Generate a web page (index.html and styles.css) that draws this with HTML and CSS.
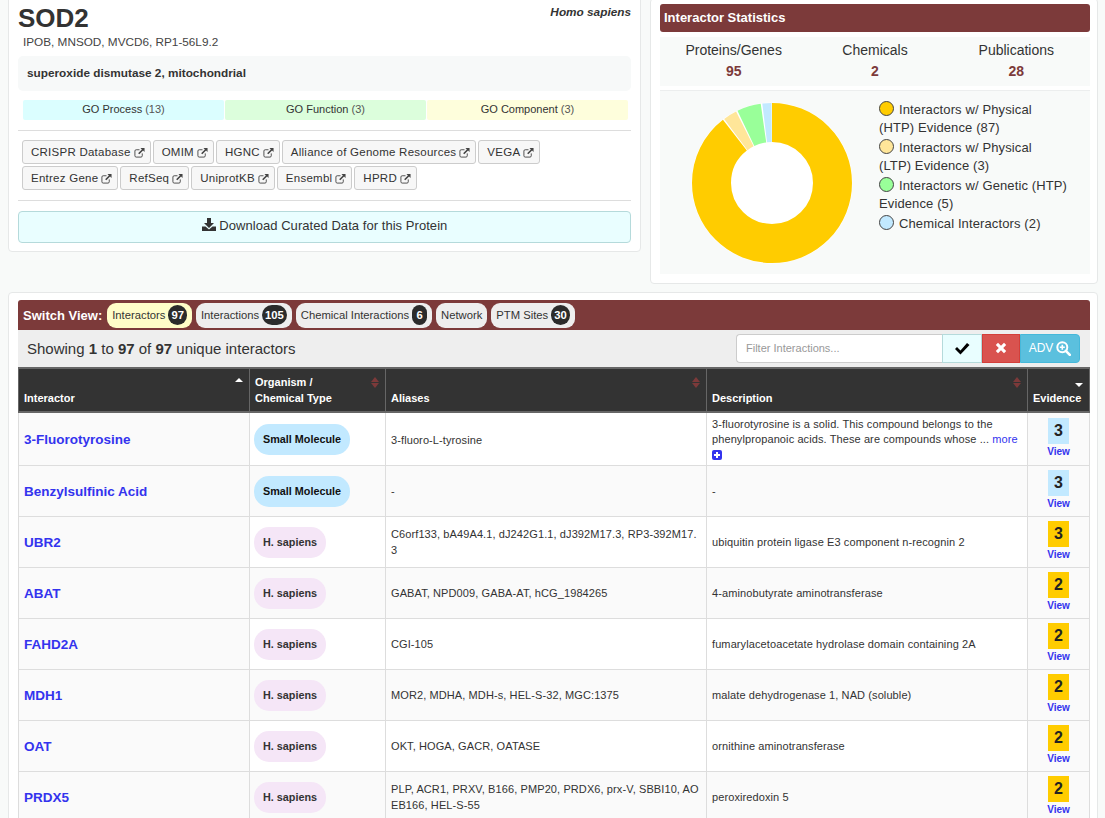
FILE: index.html
```html
<!DOCTYPE html>
<html lang="en">
<head>
  <meta charset="UTF-8">
  <title>SOD2 Result Summary</title>
  <link rel="stylesheet" href="styles.css">
</head>
<body>

<svg class="icon-defs" width="0" height="0">
  <symbol id="ext" viewBox="0 0 12 12">
    <path d="M9 7v2.6A1.4 1.4 0 0 1 7.600 11H2.400A1.400 1.400 0 0 1 1 9.600V4.400A1.400 1.400 0 0 1 2.400 3H6" fill="none" stroke="currentColor" stroke-width="1"/>
    <path d="M7 1h4.500v4.500L9.900 3.900 5.800 8 4.500 6.700 8.600 2.600z" fill="currentColor"/>
  </symbol>
  <symbol id="plus" viewBox="0 0 10 10">
    <rect width="10" height="10" rx="2" fill="currentColor"/>
    <path d="M4 2h2v2h2v2H6v2H4V6H2V4h2z" fill="#fff"/>
  </symbol>
</svg>

<div class="top">
  <section class="card summary">
    <div class="title-row">
      <h1>SOD2</h1>
      <em class="organism">Homo sapiens</em>
    </div>
    <p class="aliases">IPOB, MNSOD, MVCD6, RP1-56L9.2</p>
    <p class="fullname">superoxide dismutase 2, mitochondrial</p>
    <div class="go-row">
      <div class="go go-process">GO Process <span>(13)</span></div>
      <div class="go go-function">GO Function <span>(3)</span></div>
      <div class="go go-component">GO Component <span>(3)</span></div>
    </div>
    <div class="links">
      <a class="link-btn">CRISPR Database <svg class="ext"><use href="#ext"/></svg></a>
      <a class="link-btn">OMIM <svg class="ext"><use href="#ext"/></svg></a>
      <a class="link-btn">HGNC <svg class="ext"><use href="#ext"/></svg></a>
      <a class="link-btn">Alliance of Genome Resources <svg class="ext"><use href="#ext"/></svg></a>
      <a class="link-btn">VEGA <svg class="ext"><use href="#ext"/></svg></a>
      <a class="link-btn">Entrez Gene <svg class="ext"><use href="#ext"/></svg></a>
      <a class="link-btn">RefSeq <svg class="ext"><use href="#ext"/></svg></a>
      <a class="link-btn">UniprotKB <svg class="ext"><use href="#ext"/></svg></a>
      <a class="link-btn">Ensembl <svg class="ext"><use href="#ext"/></svg></a>
      <a class="link-btn">HPRD <svg class="ext"><use href="#ext"/></svg></a>
    </div>
    <button class="download">
      <svg class="download-icon" viewBox="0 0 14 13"><path d="M5 0h4v5h3L7 10 2 5h3z" fill="currentColor"/><path d="M0 8.500h3.500L7 11.500l3.500-3H14V13H0z" fill="currentColor"/></svg>
      Download Curated Data for this Protein
    </button>
  </section>

  <section class="card stats">
    <h2 class="stats-head">Interactor Statistics</h2>
    <div class="counts">
      <div class="count">Proteins/Genes<strong>95</strong></div>
      <div class="count">Chemicals<strong>2</strong></div>
      <div class="count">Publications<strong>28</strong></div>
    </div>
    <div class="chart-box">
      <svg class="donut" viewBox="0 0 164 164" width="164" height="164">
        <circle cx="82" cy="82" r="80.500" fill="#fff"/>
        <g fill="none" stroke-width="39" transform="rotate(-90 82 82)">
          <circle cx="82" cy="82" r="60.500" pathLength="97" stroke="#ffcc00" stroke-dasharray="86.800 97"/>
          <circle cx="82" cy="82" r="60.500" pathLength="97" stroke="#ffe699" stroke-dasharray="2.700 97" stroke-dashoffset="-87.100"/>
          <circle cx="82" cy="82" r="60.500" pathLength="97" stroke="#99ff99" stroke-dasharray="4.700 97" stroke-dashoffset="-90.100"/>
          <circle cx="82" cy="82" r="60.500" pathLength="97" stroke="#c2e9ff" stroke-dasharray="1.800 97" stroke-dashoffset="-95.100"/>
        </g>
      </svg>
      <ul class="legend">
        <li><i class="dot dot-htp"></i>Interactors w/ Physical<br>(HTP) Evidence (87)</li>
        <li><i class="dot dot-ltp"></i>Interactors w/ Physical<br>(LTP) Evidence (3)</li>
        <li><i class="dot dot-gen"></i>Interactors w/ Genetic (HTP)<br>Evidence (5)</li>
        <li><i class="dot dot-chem"></i>Chemical Interactors (2)</li>
      </ul>
    </div>
  </section>
</div>

<section class="card results">
  <div class="switch">
    <strong>Switch View:</strong>
    <a class="tab tab-on">Interactors <b>97</b></a>
    <a class="tab">Interactions <b>105</b></a>
    <a class="tab">Chemical Interactions <b>6</b></a>
    <a class="tab">Network</a>
    <a class="tab">PTM Sites <b>30</b></a>
  </div>
  <div class="toolbar">
    <div class="showing">Showing <b>1</b> to <b>97</b> of <b>97</b> unique interactors</div>
    <div class="filter">
      <input class="filter-input" type="text" placeholder="Filter Interactions...">
      <button class="fbtn fbtn-go"><svg width="16" height="13" viewBox="0 0 16 13"><path d="M1 7l2-2 3.500 3.500L13 1l2.500 2-9 9.500z" fill="currentColor"/></svg></button>
      <button class="fbtn fbtn-clear"><svg width="12" height="12" viewBox="0 0 12 12"><path d="M3 .8L6 3.800 9 .8 11.200 3 8.200 6l3 3L9 11.200l-3-3-3 3L.8 9l3-3-3-3z" fill="currentColor"/></svg></button>
      <button class="fbtn fbtn-adv">ADV <svg width="15" height="15" viewBox="0 0 15 15"><circle cx="6.300" cy="6.300" r="5" fill="none" stroke="currentColor" stroke-width="2"/><path d="M9.800 9.800l4 4" stroke="currentColor" stroke-width="2.600" stroke-linecap="round"/><path d="M6.300 3.800v5M3.800 6.300h5" stroke="currentColor" stroke-width="1.600"/></svg></button>
    </div>
  </div>
  <table class="grid">
    <colgroup>
      <col class="c-name"><col class="c-org"><col class="c-alias"><col class="c-desc"><col class="c-ev">
    </colgroup>
    <thead>
      <tr>
        <th class="sorted-asc">Interactor</th>
        <th class="sortable">Organism /<br>Chemical Type</th>
        <th class="sortable">Aliases</th>
        <th class="sortable">Description</th>
        <th class="sorted-desc">Evidence</th>
      </tr>
    </thead>
    <tbody>
      <tr class="tall">
        <td class="name"><a>3-Fluorotyrosine</a></td>
        <td class="org"><span class="pill pill-chem">Small Molecule</span></td>
        <td class="alias">3-fluoro-L-tyrosine</td>
        <td class="desc"><span class="line">3-fluorotyrosine is a solid. This compound belongs to the</span><span class="line">phenylpropanoic acids. These are compounds whose ... <a class="more">more</a></span><svg class="plus"><use href="#plus"/></svg></td>
        <td class="ev"><span class="score score-chem">3</span><a>View</a></td>
      </tr>
      <tr>
        <td class="name"><a>Benzylsulfinic Acid</a></td>
        <td class="org"><span class="pill pill-chem">Small Molecule</span></td>
        <td class="alias">-</td>
        <td class="desc">-</td>
        <td class="ev"><span class="score score-chem">3</span><a>View</a></td>
      </tr>
      <tr>
        <td class="name"><a>UBR2</a></td>
        <td class="org"><span class="pill">H. sapiens</span></td>
        <td class="alias">C6orf133, bA49A4.1, dJ242G1.1, dJ392M17.3, RP3-392M17.3</td>
        <td class="desc">ubiquitin protein ligase E3 component n-recognin 2</td>
        <td class="ev"><span class="score">3</span><a>View</a></td>
      </tr>
      <tr>
        <td class="name"><a>ABAT</a></td>
        <td class="org"><span class="pill">H. sapiens</span></td>
        <td class="alias">GABAT, NPD009, GABA-AT, hCG_1984265</td>
        <td class="desc">4-aminobutyrate aminotransferase</td>
        <td class="ev"><span class="score">2</span><a>View</a></td>
      </tr>
      <tr>
        <td class="name"><a>FAHD2A</a></td>
        <td class="org"><span class="pill">H. sapiens</span></td>
        <td class="alias">CGI-105</td>
        <td class="desc">fumarylacetoacetate hydrolase domain containing 2A</td>
        <td class="ev"><span class="score">2</span><a>View</a></td>
      </tr>
      <tr>
        <td class="name"><a>MDH1</a></td>
        <td class="org"><span class="pill">H. sapiens</span></td>
        <td class="alias">MOR2, MDHA, MDH-s, HEL-S-32, MGC:1375</td>
        <td class="desc">malate dehydrogenase 1, NAD (soluble)</td>
        <td class="ev"><span class="score">2</span><a>View</a></td>
      </tr>
      <tr>
        <td class="name"><a>OAT</a></td>
        <td class="org"><span class="pill">H. sapiens</span></td>
        <td class="alias">OKT, HOGA, GACR, OATASE</td>
        <td class="desc">ornithine aminotransferase</td>
        <td class="ev"><span class="score">2</span><a>View</a></td>
      </tr>
      <tr>
        <td class="name"><a>PRDX5</a></td>
        <td class="org"><span class="pill">H. sapiens</span></td>
        <td class="alias">PLP, ACR1, PRXV, B166, PMP20, PRDX6, prx-V, SBBI10, AOEB166, HEL-S-55</td>
        <td class="desc">peroxiredoxin 5</td>
        <td class="ev"><span class="score">2</span><a>View</a></td>
      </tr>
    </tbody>
  </table>
</section>

</body>
</html>
```

FILE: styles.css
```css
html, body {
  height: 100%;
}
body {
  font-family: "Liberation Sans", Arial, sans-serif;
  font-size: 11px;
  color: #333;
  margin: 0;
  background-color: #f8faf9;
  overflow: hidden;
}
* {
  box-sizing: border-box;
}
.icon-defs {
  position: absolute;
}
.card {
  background-color: #fff;
  border: 1px solid #e6e8e8;
  border-radius: 4px;
}
.top {
  display: flex;
  align-items: flex-start;
  margin-left: 8px;
  height: 292px;
}

/* summary */
.summary {
  width: 633px;
  height: 256px;
  margin-top: -4px;
  padding: 5px 9px 0;
}
.title-row {
  display: flex;
  justify-content: space-between;
}
h1 {
  font-size: 26px;
  line-height: 32px;
  margin: 0;
  font-weight: bold;
}
.organism {
  font-size: 11.800px;
  font-weight: bold;
  line-height: 16px;
  margin: 2px 0 0;
}
.aliases {
  font-size: 11.750px;
  line-height: 16px;
  color: #444;
  margin: 0 0 0 5px;
}
.fullname {
  font-size: 11.800px;
  font-weight: bold;
  background-color: #f7f9f9;
  border-radius: 5px;
  height: 35px;
  line-height: 34px;
  padding: 0 8px 0 9px;
  margin: 6px 0 9px;
}
.go-row {
  display: flex;
  gap: 1px;
  padding: 0 3px 10px 5px;
  border-bottom: 1px solid #ddd;
}
.go {
  flex: 1;
  height: 20px;
  line-height: 19px;
  text-align: center;
  border-radius: 2px;
}
.go span {
  color: #555;
}
.go-process {
  background-color: #dbfeff;
}
.go-function {
  background-color: #dcfedc;
}
.go-component {
  background-color: #fefedc;
}
.links {
  display: flex;
  flex-wrap: wrap;
  gap: 2px;
  padding: 9px 5px 10px 4px;
  border-bottom: 1px solid #ddd;
}
.link-btn {
  display: flex;
  align-items: center;
  gap: 3px;
  height: 24px;
  padding: 0 5px 0 8px;
  background-color: #f7f7f7;
  border: 1px solid #ccc;
  border-radius: 3px;
  font-size: 11.500px;
  letter-spacing: 0.250px;
}
.ext {
  width: 11px;
  height: 11px;
  color: #444;
}
.download {
  display: block;
  width: 100%;
  height: 32px;
  margin-top: 10px;
  padding: 0 0 3px;
  background-color: #e9feff;
  border: 1px solid #b5dadb;
  border-radius: 4px;
  font-family: inherit;
  font-size: 13px;
  letter-spacing: 0.050px;
  color: #333;
}
.download-icon {
  width: 14px;
  height: 13px;
  vertical-align: -1px;
}

/* stats */
.stats {
  width: 448px;
  height: 286px;
  margin-left: 9px;
  margin-top: -2px;
  padding: 5px 7px 0 9px;
}
.stats-head {
  background-color: #7c3a3a;
  color: #fff;
  font-size: 13px;
  font-weight: bold;
  height: 28px;
  line-height: 27px;
  padding-left: 4px;
  margin: 0 0 5px;
  border-radius: 3px;
}
.counts {
  display: grid;
  grid-template-columns: repeat(3, 1fr);
  background-color: #f8faf9;
  height: 49px;
  padding: 3px 3px 0;
  margin-bottom: 4px;
}
.count {
  text-align: center;
  font-size: 14px;
  line-height: 21px;
}
.count strong {
  display: block;
  color: #7c3a3a;
}
.chart-box {
  display: flex;
  background-color: #f8faf9;
  border-top: 1px solid #eceeee;
  height: 184px;
  padding: 10px 0 0 30px;
}
.donut {
  flex: none;
}
.legend {
  list-style: none;
  margin: 0 0 0 25px;
  padding: 0;
  font-size: 13px;
  letter-spacing: 0.120px;
  line-height: 18px;
  width: 200px;
}
.legend li {
  margin-bottom: 2px;
}
.dot {
  display: inline-block;
  width: 15px;
  height: 15px;
  border-radius: 50%;
  border: 1px solid #444;
  margin-right: 5px;
  vertical-align: -2px;
}
.dot-htp {
  background-color: #ffcc00;
}
.dot-ltp {
  background-color: #ffe699;
}
.dot-gen {
  background-color: #99ff99;
}
.dot-chem {
  background-color: #c2e9ff;
}

/* results */
.results {
  width: 1090px;
  margin-left: 8px;
  padding: 7px 7px 0 9px;
}
.switch {
  display: flex;
  align-items: center;
  gap: 4px;
  height: 30px;
  padding-left: 5px;
  background-color: #7c3a3a;
  border-radius: 3px 3px 0 0;
  color: #fff;
}
.switch strong {
  font-size: 13px;
  margin-right: 1px;
}
.tab {
  display: flex;
  align-items: center;
  gap: 3px;
  height: 25px;
  padding: 0 5px;
  border-radius: 9px;
  background-color: #eee;
  color: #333;
  font-size: 11.250px;
}
.tab-on {
  background-color: #fffdc8;
}
.tab b {
  display: block;
  min-width: 15px;
  height: 20px;
  line-height: 20px;
  padding: 0 3px;
  border-radius: 10px;
  background-color: #2b2b2b;
  color: #fff;
  text-align: center;
}
.toolbar {
  display: flex;
  justify-content: space-between;
  align-items: center;
  height: 37px;
  padding: 0 10px 0 9px;
  background-color: #eee;
}
.showing {
  font-size: 15px;
}
.filter {
  display: flex;
  height: 29px;
  margin-top: -1px;
}
.filter-input {
  width: 206px;
  border: 1px solid #ccc;
  border-right: none;
  border-radius: 4px 0 0 4px;
  padding: 0 9px;
  font-family: inherit;
  font-size: 11px;
}
.filter-input::placeholder {
  color: #999;
}
.fbtn {
  border: 1px solid #b5dadb;
  font-family: inherit;
  font-size: 11px;
  padding: 0;
  display: flex;
  align-items: center;
  justify-content: center;
}
.fbtn-go {
  width: 40px;
  background-color: #e9feff;
  color: #000;
}
.fbtn-clear {
  width: 38px;
  background-color: #d9534f;
  border-color: #d43f3a;
  color: #fff;
}
.fbtn-adv {
  width: 60px;
  gap: 3px;
  background-color: #5bc0de;
  border-color: #46b8da;
  border-radius: 0 4px 4px 0;
  color: #fff;
  font-size: 12px;
}
.grid {
  width: 1071px;
  table-layout: fixed;
  border-collapse: collapse;
}
.c-name {
  width: 231px;
}
.c-org {
  width: 136px;
}
.c-alias {
  width: 321px;
}
.c-desc {
  width: 321px;
}
.c-ev {
  width: 62px;
}
.grid th {
  position: relative;
  height: 44px;
  background-color: #333;
  color: #fff;
  border: 2px solid #666;
  border-width: 2px 1px;
  text-align: left;
  vertical-align: bottom;
  padding: 0 5px 5px;
  line-height: 16px;
  font-weight: bold;
}
.sorted-asc::after, .sortable::before, .sortable::after, .sorted-desc::after {
  content: "";
  position: absolute;
  right: 6px;
  border-left: 4px solid transparent;
  border-right: 4px solid transparent;
}
.sorted-asc::after {
  top: 9px;
  border-bottom: 4px solid #fff;
}
.sorted-desc::after {
  top: 14px;
  border-top: 4px solid #fff;
}
.sortable::before {
  top: 8px;
  border-bottom: 5px solid #7c3a3a;
}
.sortable::after {
  top: 14px;
  border-top: 5px solid #7c3a3a;
}
.grid td {
  height: 51px;
  padding: 4px 5px 2px;
  border: 1px solid #ddd;
  line-height: 16px;
  vertical-align: middle;
}
.grid td.alias, .grid td.desc {
  padding: 3px 5px;
  letter-spacing: 0.100px;
}
.grid td.ev {
  padding: 2px 5px 4px;
}
.grid .tall td {
  height: 53px;
  padding-top: 2px;
  padding-bottom: 0;
}
.grid .tall td.ev {
  padding-top: 0;
  padding-bottom: 2px;
}
.grid .tall td.desc {
  padding-top: 0;
  line-height: 15px;
}
.grid tbody tr:nth-child(even) td {
  background-color: #fafafa;
}
.grid td.name, .grid td.ev {
  background-color: #fafafa;
}
.grid td.org {
  padding-left: 4px;
}
.alias {
  word-break: break-all;
}
.line {
  display: block;
}
.name a {
  color: #3333ee;
  font-size: 13.500px;
  font-weight: bold;
}
.pill {
  display: inline-block;
  height: 31px;
  line-height: 31px;
  padding: 0 9px;
  border-radius: 15px;
  background-color: #f5e6f7;
  font-weight: bold;
  font-size: 10.800px;
  color: #333;
}
.pill-chem {
  background-color: #c2e9ff;
  color: #111;
}
.ev {
  text-align: center;
}
.score {
  display: block;
  width: 21px;
  height: 26px;
  line-height: 26px;
  margin: 0 auto;
  background-color: #ffcc00;
  font-size: 16px;
  font-weight: bold;
  color: #222;
}
.score-chem {
  background-color: #c2e9ff;
}
.ev a {
  display: block;
  color: #3333ee;
  font-size: 10px;
  font-weight: bold;
  line-height: 13px;
  margin-top: 1px;
}
.more {
  color: #3333ee;
}
.plus {
  display: block;
  width: 10px;
  height: 10px;
  margin-top: 3px;
  color: #3333ee;
}
```
